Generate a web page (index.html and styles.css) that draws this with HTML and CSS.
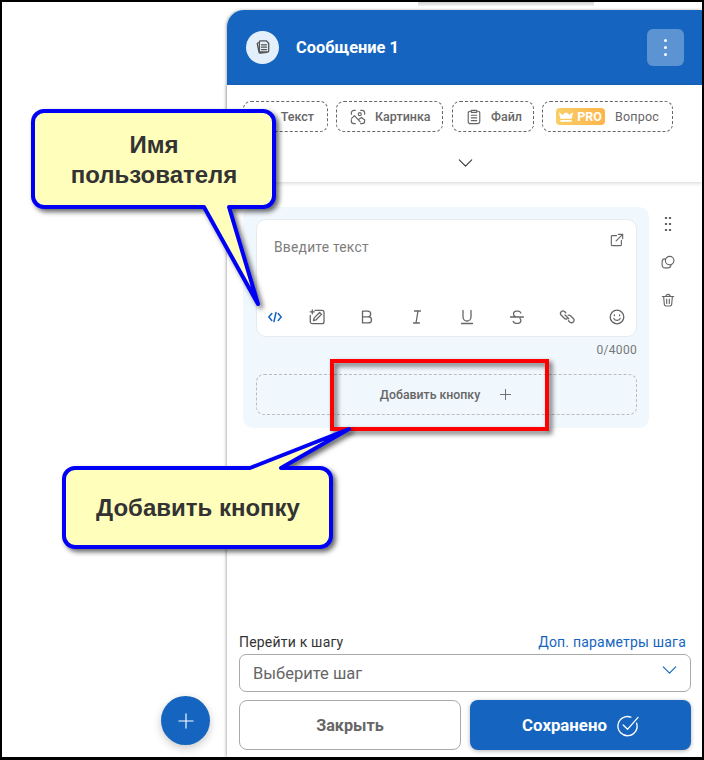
FILE: index.html
```html
<!DOCTYPE html>
<html lang="ru">
<head>
<meta charset="utf-8">
<title>Сообщение 1</title>
<link rel="stylesheet" href="styles.css">
</head>
<body>
<div class="page">
  <div class="frame">
    <div class="top-shade"></div>
    <aside class="rail">
      <button class="fab" aria-label="Добавить">
        <svg class="fab-icon" viewBox="0 0 18 18"><path d="M9 1v16M1 9h16"/></svg>
      </button>
    </aside>
    <section class="panel">
      <header class="head">
        <div class="head-badge">
          <svg class="i16" viewBox="0 0 16 16"><path d="M4.200 3.600 3 3.900a1 1 0 0 0-.7 1.200l1.700 8a1.200 1.200 0 0 0 1.400 1l6.600-.8M5 1.800h6.200l2.500 2.400v7.800a1 1 0 0 1-1 1H5.400a1 1 0 0 1-1-1V2.800a1 1 0 0 1 .6-1zM6.500 5.800h5M6.500 8.200h5M6.500 10.600h5"/></svg>
        </div>
        <h1 class="head-title">Сообщение 1</h1>
        <button class="head-menu" aria-label="Меню"><span class="dot"></span><span class="dot"></span><span class="dot"></span></button>
      </header>
      <div class="tools">
        <div class="chips">
          <div class="chip chip-text"><span>Текст</span></div>
          <div class="chip chip-image">
            <svg class="i16" viewBox="0 0 18 18"><path d="M1.500 6V4.500a3 3 0 0 1 3-3H6M12 1.500h1.500a3 3 0 0 1 3 3V6M1.500 12v1.500a3 3 0 0 0 3 3H6M12 16.500h1.500a3 3 0 0 0 3-3V12M1.800 10.500 5 7.500l6.500 7M10 11.500l3-2 3.200 2.800"/><circle cx="11" cy="5.800" r="1.700"/></svg>
            <span>Картинка</span>
          </div>
          <div class="chip chip-file">
            <svg class="i16" viewBox="0 0 18 18"><path d="M6 2.500H4.500a2 2 0 0 0-2 2V14a2.500 2.500 0 0 0 2.500 2.500h8a2.500 2.500 0 0 0 2.500-2.500V4.500a2 2 0 0 0-2-2H12M6 1.500h6v2.300H6zM6 7h6M6 10h6M6 13h6"/></svg>
            <span>Файл</span>
          </div>
          <div class="chip chip-pro">
            <span class="pro"><svg class="crown" viewBox="0 0 16 11"><path d="M0 0l4 3 4-3 4 3 4-3-1.500 7.500h-13zM1.500 9h13v2h-13z"/></svg>PRO</span>
            <span>Вопрос</span>
          </div>
        </div>
        <svg class="more" viewBox="0 0 16 9"><path d="M1 1l7 7 7-7"/></svg>
      </div>
      <main class="body">
        <div class="message">
          <div class="editor">
            <div class="editor-top">
              <span class="placeholder">Введите текст</span>
              <svg class="i14 open" viewBox="0 0 16 16"><path d="M7.500 3H2.500a1 1 0 0 0-1 1v9.500a1 1 0 0 0 1 1H12a1 1 0 0 0 1-1V8.500M9.500 1.500h5v5M14.500 1.500l-7.500 7.500"/></svg>
            </div>
            <div class="format">
              <svg class="i14 code" viewBox="0 0 14 14"><path d="M3.800 3.500.8 7l3 3.500M10.200 3.500l3 3.500-3 3.500M8 2.500 6 11.500"/></svg>
              <svg class="i16" viewBox="0 0 16 16"><path d="M6 1.300h7a2 2 0 0 1 2 2v9.400a2 2 0 0 1-2 2H3.300a2 2 0 0 1-2-2V6.500M3.300 .8v4M1.300 2.800h4M4.500 11.500l.7-2.600 5.400-5.400 1.900 1.900-5.400 5.400z"/></svg>
              <svg class="i16" viewBox="0 0 16 16"><path d="M3.500 2.200h5.300a2.800 2.800 0 0 1 0 5.700H3.500zM3.500 7.900h6a3 3 0 0 1 0 6h-6z"/></svg>
              <svg class="i16" viewBox="0 0 16 16"><path d="M5.500 2h6M4.500 14h6M9 2 7 14"/></svg>
              <svg class="i16" viewBox="0 0 16 16"><path d="M4 1.500V8a4 4 0 0 0 8 0V1.500M2.500 14.500h11"/></svg>
              <svg class="i16" viewBox="0 0 16 16"><path d="M11.800 4a3 3 0 0 0-2.800-1.800H7.200A2.700 2.700 0 0 0 4.500 5c0 1.300.8 2.300 2 2.700M1.500 8h13M11 9.500c.6.600.9 1.300.9 2a2.900 2.900 0 0 1-2.900 2.800H7A3 3 0 0 1 4.200 12.400"/></svg>
              <svg class="i16" viewBox="0 0 16 16"><path d="M9.800 9.800 6 6M6.800 3.800 5.500 2.500a2.500 2.500 0 0 0-3.500 3.500l3.300 3.300a2.500 2.500 0 0 0 2.700.5M9.200 6.200a2.500 2.500 0 0 1 2.300.5l3 3a2.500 2.500 0 0 1-3.500 3.500l-1.500-1.500"/></svg>
              <svg class="i16" viewBox="0 0 16 16"><circle cx="8" cy="8" r="6.800"/><path d="M4.800 9.500a3.700 3.700 0 0 0 6.400 0M5.400 5.800v.9M10.600 5.800v.9"/></svg>
            </div>
          </div>
          <div class="count">0/4000</div>
          <div class="add-btn">
            <span>Добавить кнопку</span>
            <svg class="i10" viewBox="0 0 12 12"><path d="M6 0v12M0 6h12"/></svg>
          </div>
        </div>
        <div class="side">
          <svg class="i14" viewBox="0 0 14 14"><path class="grip" d="M5 0v14M9 0v14"/></svg>
          <svg class="i14" viewBox="0 0 16 16"><rect x="5" y="1.500" width="9.800" height="9.800" rx="4.900"/><path d="M4.500 4.500a2.800 2.800 0 0 0-3.200 2.800v4.400a3 3 0 0 0 3 3h4a3 3 0 0 0 3-3.300"/></svg>
          <svg class="i14" viewBox="0 0 16 16"><path d="M1.500 4h13M5.500 4c0-3.200 5-3.200 5 0M3 4l.8 9a2 2 0 0 0 2 1.800h4.400a2 2 0 0 0 2-1.800L13 4M6.500 7v5M9.500 7v5"/></svg>
        </div>
      </main>
      <footer class="foot">
        <div class="foot-labels">
          <span class="foot-label">Перейти к шагу</span>
          <a class="foot-link">Доп. параметры шага</a>
        </div>
        <div class="select">
          <span>Выберите шаг</span>
          <svg class="select-arrow" viewBox="0 0 16 9"><path d="M1 1l7 7 7-7"/></svg>
        </div>
        <div class="actions">
          <button class="btn btn-close">Закрыть</button>
          <button class="btn btn-save">Сохранено
            <svg class="save-icon" viewBox="0 0 24 24"><path d="M21.500 9.500A10 10 0 1 1 15.500 3.300M7.500 11.500l4.500 4.500L23 3.500"/></svg>
          </button>
        </div>
      </footer>
    </section>
  </div>
  <svg class="overlay" width="704" height="760" viewBox="0 0 704 760">
    <defs>
      <filter id="shade" x="-10%" y="-10%" width="125%" height="125%">
        <feDropShadow dx="3" dy="3" stdDeviation="2.500" flood-color="#000" flood-opacity=".6"/>
      </filter>
    </defs>
    <rect class="red-box" x="332" y="361" width="215" height="68" filter="url(#shade)"/>
    <path class="callout" filter="url(#shade)" d="M46 111H263a11 11 0 0 1 11 11V196a11 11 0 0 1-11 11H229L258 304 204 207H44a11 11 0 0 1-11-11V122a11 11 0 0 1 11-11Z"/>
    <path class="callout" filter="url(#shade)" d="M75 468H250L349 429 281 468H320a11 11 0 0 1 11 11V536a11 11 0 0 1-11 11H75a11 11 0 0 1-11-11V479a11 11 0 0 1 11-11Z"/>
    <text class="callout-text" x="154" y="153">Имя</text>
    <text class="callout-text" x="154" y="183">пользователя</text>
    <text class="callout-text" x="198" y="516">Добавить кнопку</text>
  </svg>
</div>
</body>
</html>
```

FILE: styles.css
```css
* { box-sizing: border-box; }
html, body { margin: 0; padding: 0; background: #fff; }
body { font-family: Roboto, "Liberation Sans", sans-serif; color: #666; }
svg { display: block; flex: none; fill: none; stroke: currentColor; stroke-width: 1.300; stroke-linecap: round; stroke-linejoin: round; }
button { font-family: inherit; border: 0; padding: 0; }

.page { position: relative; width: 704px; height: 760px; overflow: hidden; }
.frame { position: relative; width: 704px; height: 760px; border: solid #000; border-width: 2px 2px 3px 2px; display: flex; background: #fff; }
.top-shade { position: absolute; left: 416px; top: 0; width: 176px; height: 4px; background: linear-gradient(#cfcfcf, #f4f4f4); }

.rail { width: 225px; flex: none; display: flex; flex-direction: column; justify-content: flex-end; align-items: flex-start; padding: 0 0 12px 159px; }
.fab { width: 49px; height: 49px; border-radius: 50%; background: #1565c0; color: #fff; display: flex; align-items: center; justify-content: center; box-shadow: 0 3px 8px rgba(0,0,0,.22); }
.fab-icon { width: 16px; height: 16px; }

.panel { flex: 1; min-width: 0; margin-top: 8px; display: flex; flex-direction: column; border-radius: 17px 0 0 0; background: #fff; box-shadow: -1px 0 3px rgba(0,0,0,.3); z-index: 1; }
.head { height: 75px; flex: none; background: #1565c0; border-radius: 17px 0 0 0; display: flex; align-items: center; padding: 0 18px 0 19px; color: #fff; }
.head-badge { width: 33px; height: 33px; border-radius: 50%; background: #e3f0fb; color: #555; display: flex; align-items: center; justify-content: center; margin-top: -1px; }
.head-title { margin: 1px 0 0 17px; font-size: 16.400px; font-weight: 700; line-height: 20px; flex: 1; }
.head-menu { width: 37px; height: 37px; margin-top: -1px; border-radius: 6px; background: rgba(255,255,255,.3); display: flex; flex-direction: column; align-items: center; justify-content: center; gap: 4px; }
.dot { width: 3px; height: 3px; border-radius: 50%; background: #fff; }

.tools { height: 97px; flex: none; padding: 16px 16px 0; display: flex; flex-direction: column; align-items: stretch; box-shadow: 0 1px 4px rgba(0,0,0,.18); position: relative; }
.chips { display: flex; gap: 8px; }
.chip { height: 31px; border: 1px dashed #666; border-radius: 8px; display: flex; align-items: center; font-size: 12.500px; font-weight: 500; color: #666; gap: 9px; padding: 0 13px; }
.chip-text { width: 85px; justify-content: flex-end; padding-right: 13px; }
.chip-image { width: 107px; }
.chip-file { width: 82px; margin-left: 1px; }
.chip-pro { width: 131px; gap: 10px; padding-left: 13px; font-weight: 400; letter-spacing: .2px; }
.pro { background: linear-gradient(90deg, #f8cf66, #fdb44b); color: #fff; font-weight: 700; height: 17px; width: 53px; border-radius: 4px; display: flex; align-items: center; justify-content: center; gap: 4px; font-size: 12.500px; letter-spacing: 0; }
.crown { width: 14px; height: 10px; fill: #fff; stroke: none; }
.more { width: 15px; height: 8px; margin: 27px 0 0 215px; color: #333; stroke-width: 1.200; }

.i16 { width: 16px; height: 16px; }
.i14 { width: 14px; height: 14px; }
.i10 { width: 11px; height: 11px; stroke-width: 1; }

.body { flex: 1; padding: 25px 12px 0 16px; display: flex; align-items: flex-start; gap: 12px; }
.message { width: 406px; height: 221px; flex: none; background: #f0f7fd; border-radius: 10px; padding: 12px 12px 13px 13px; display: flex; flex-direction: column; }
.editor { height: 118px; background: #fff; border: 1px solid #e5ebf0; border-radius: 10px; display: flex; flex-direction: column; justify-content: space-between; flex: none; }
.editor-top { display: flex; justify-content: space-between; padding: 13px 12px 0 17px; }
.placeholder { font-size: 13.800px; line-height: 28px; color: #7d7d7d; letter-spacing: .25px; margin-top: -.5px; }
.open { color: #666; }
.format { display: flex; justify-content: flex-start; gap: 34px; align-items: center; padding: 0 0 11px 11px; height: 28px; color: #666; }
.code { color: #1565c0; stroke-width: 1.500; margin-right: -7px; }
.count { text-align: right; font-size: 12px; line-height: 16px; margin-top: 5px; color: #777; letter-spacing: .3px; }
.add-btn { height: 41px; margin-top: 16px; padding-right: 2px; border: 1px dashed #bbb; border-radius: 8px; display: flex; align-items: center; justify-content: center; gap: 20px; font-size: 12.300px; font-weight: 500; color: #666; }

.side { display: flex; flex-direction: column; align-items: center; gap: 24px; padding-top: 10px; color: #666; }
.grip { stroke-width: 2.200; stroke-dasharray: 2 4; stroke-linecap: butt; }

.foot { flex: none; padding: 0 11px 7px 12px; display: flex; flex-direction: column; }
.foot-labels { display: flex; justify-content: space-between; font-size: 14px; line-height: 16px; margin-bottom: 4px; letter-spacing: .2px; }
.foot-label { color: #333; }
.foot-link { color: #1565c0; padding-right: 5px; }
.select { height: 38px; border: 1px solid #aaa; border-radius: 7px; display: flex; align-items: center; justify-content: space-between; padding: 0 13px; font-size: 16.500px; color: #666; }
.select-arrow { width: 15px; height: 8px; color: #1565c0; margin-top: -7px; }
.actions { display: flex; gap: 9px; margin-top: 8px; }
.btn { height: 50px; border-radius: 8px; font-size: 16.200px; font-weight: 700; display: flex; align-items: center; justify-content: center; }
.btn-close { flex: none; width: 222px; background: #fff; border: 1px solid #aaa; color: #666; }
.btn-save { flex: 1; background: #1565c0; color: #fff; gap: 9px; font-size: 16.800px; box-shadow: 0 1px 4px rgba(0,0,0,.3); }
.save-icon { width: 23px; height: 23px; stroke-width: 1.400; }

.overlay { position: absolute; left: 0; top: 0; z-index: 2; stroke: none; fill: none; }
.red-box { fill: none; stroke: #f00; stroke-width: 4; stroke-linecap: butt; stroke-linejoin: miter; }
.callout { fill: #ffffbb; stroke: #0000f5; stroke-width: 4; stroke-linejoin: round; }
.callout-text { fill: #333; stroke: none; font-family: "Liberation Sans", Arial, sans-serif; font-size: 24px; font-weight: 700; text-anchor: middle; }
```
